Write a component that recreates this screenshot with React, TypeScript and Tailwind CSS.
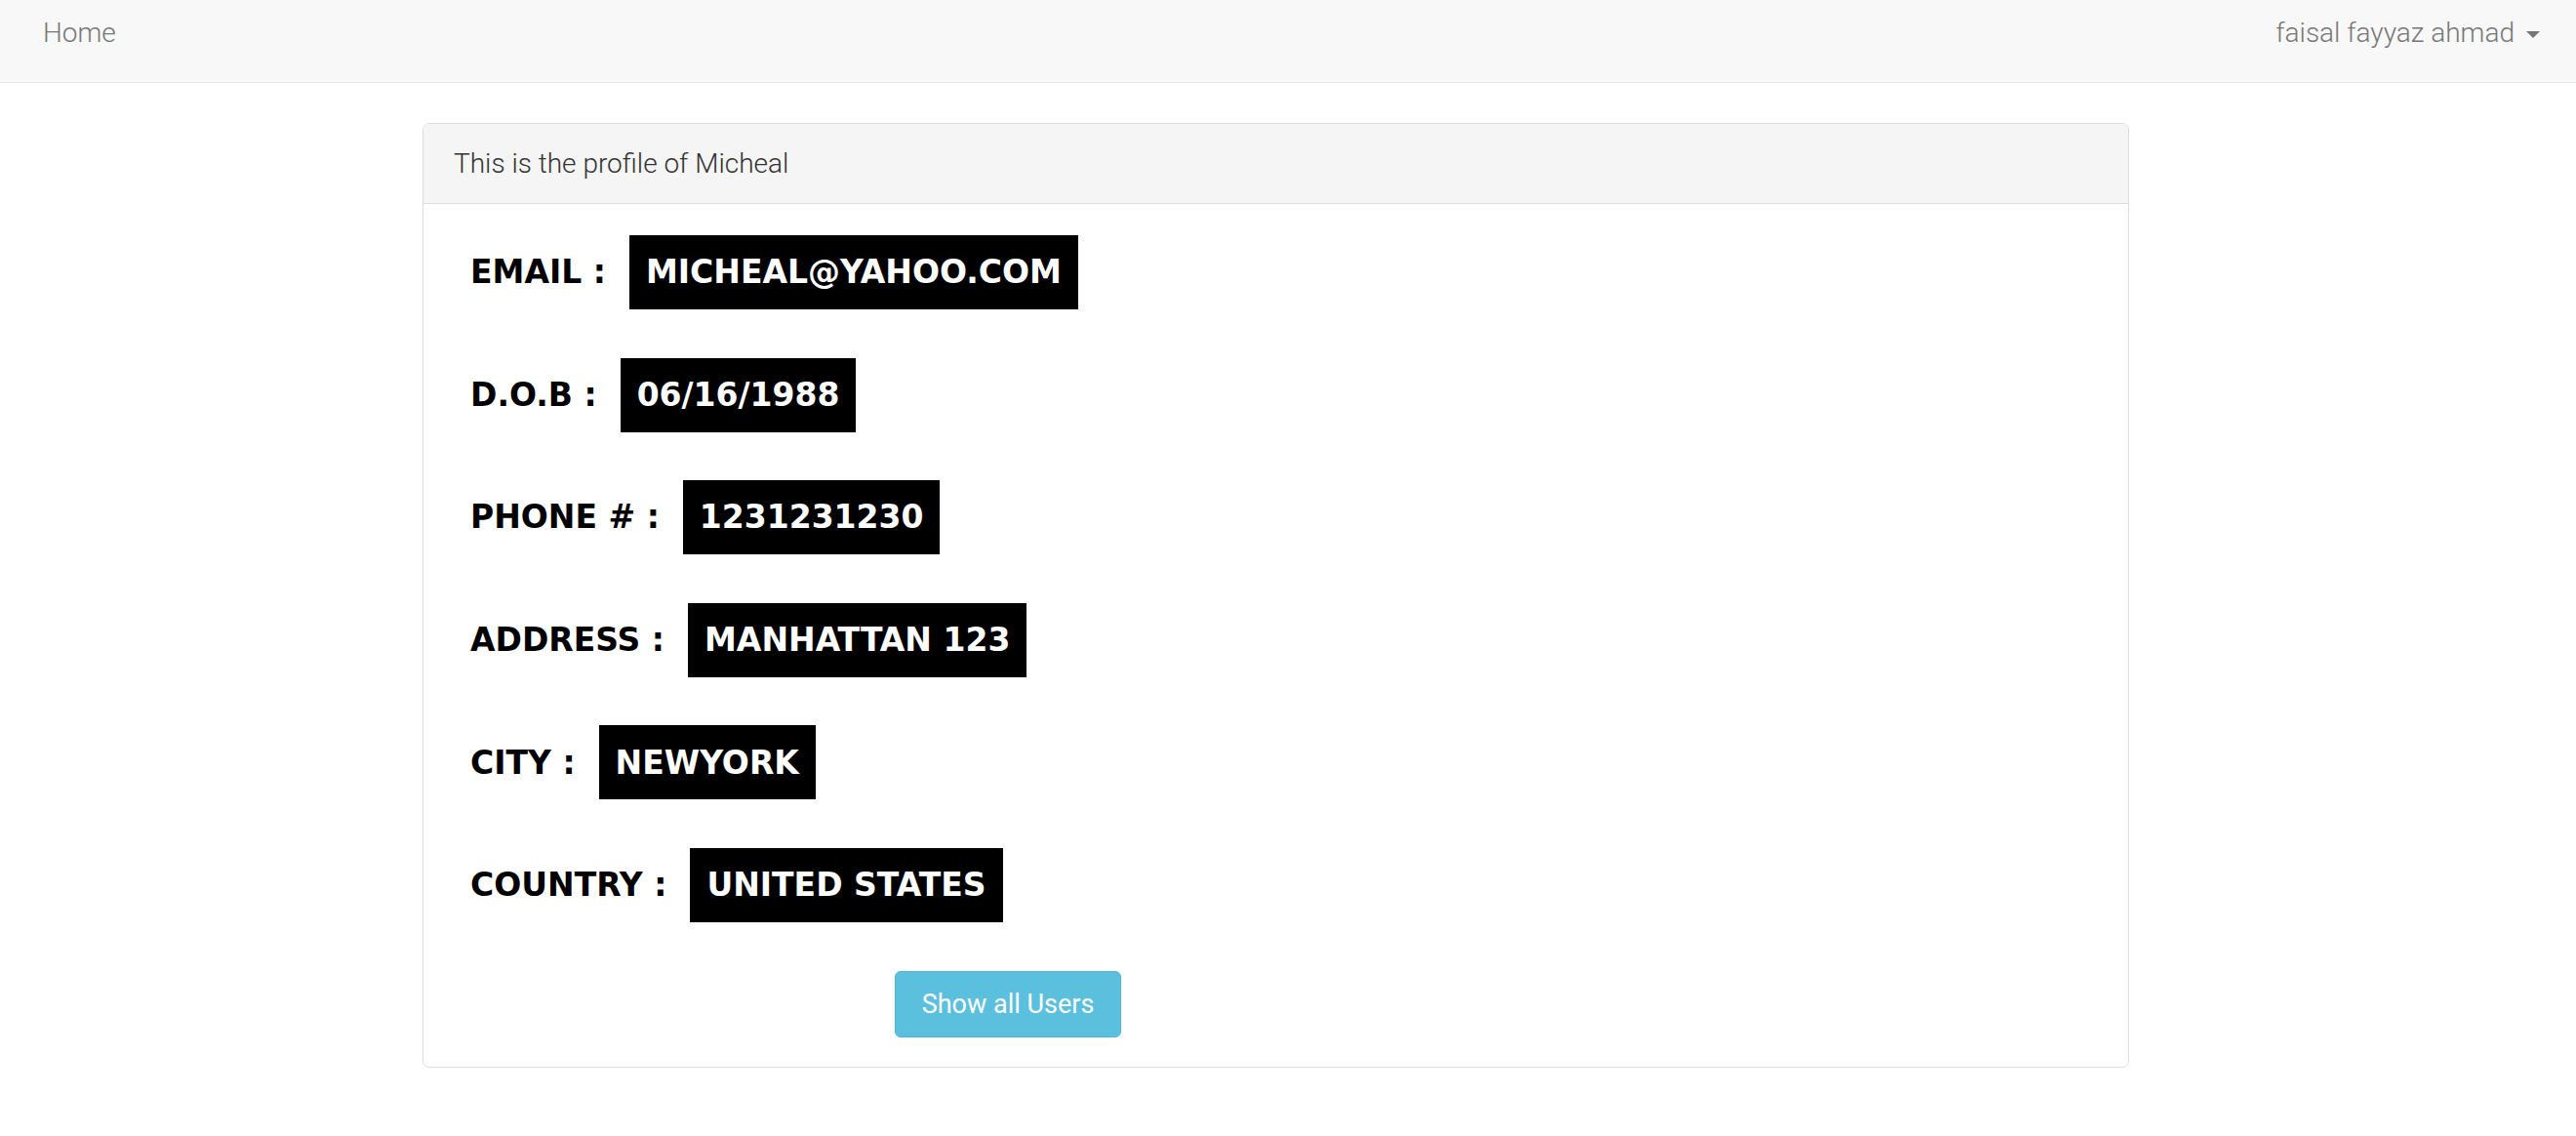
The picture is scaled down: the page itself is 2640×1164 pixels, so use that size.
export default function App() {
  const fields = [
    { label: "EMAIL :", value: "MICHEAL@YAHOO.COM" },
    { label: "D.O.B :", value: "06/16/1988" },
    { label: "PHONE # :", value: "1231231230" },
    { label: "ADDRESS :", value: "MANHATTAN 123" },
    { label: "CITY :", value: "NEWYORK" },
    { label: "COUNTRY :", value: "UNITED STATES" },
  ];

  return (
    <div className="min-h-[1164px] bg-white font-['Roboto',sans-serif]">
      {/* Navbar */}
      <nav className="flex h-[85px] items-start justify-between border-b border-[#e7e7e7] bg-[#f8f8f8] pl-[44px] pr-[37px] pt-[20px]">
        <a className="text-[28px] font-light leading-none text-[#777]">Home</a>
        <div className="flex items-center gap-[12px] text-[28px] font-light leading-none text-[#777]">
          <span>faisal fayyaz ahmad</span>
          <span className="mt-[2px] h-0 w-0 border-x-[7px] border-t-[7px] border-x-transparent border-t-[#777]"></span>
        </div>
      </nav>

      {/* Profile panel */}
      <div className="pl-[433px] pt-[41px]">
        <div className="w-[1749px] rounded-[7px] border border-[#ddd] bg-white">
          <div className="flex h-[82px] items-center rounded-t-[7px] border-b border-[#ddd] bg-[#f5f5f5] px-[31px]">
            <h3 className="text-[28px] font-light text-[#333]">This is the profile of Micheal</h3>
          </div>

          <div className="px-[48px] pb-[30px] pt-[32px]">
            <div className="flex flex-col gap-[49.6px]">
              {fields.map((f, i) => (
                <div key={i} className="flex h-[76px] items-center font-['DejaVu_Sans',sans-serif] text-[33px] font-bold">
                  <span className="mr-[24px] text-black">{f.label}</span>
                  <span className="flex h-[76px] items-center bg-black px-[17px] text-white">{f.value}</span>
                </div>
              ))}
            </div>

            <button className="ml-[435px] mt-[50px] h-[68px] w-[232px] rounded-[6px] border border-[#46b8da] bg-[#5bc0de] text-[27px] font-normal text-white">
              Show all Users
            </button>
          </div>
        </div>
      </div>
    </div>
  );
}
